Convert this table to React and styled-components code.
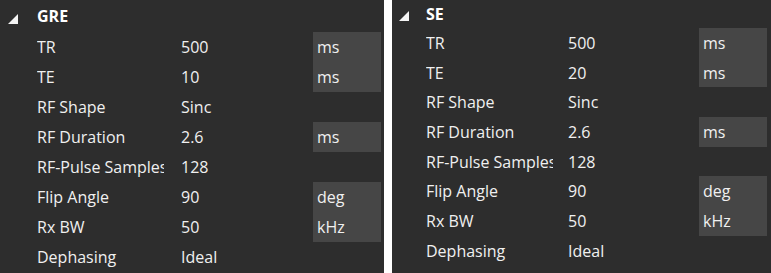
import React from 'react';
import styled, { createGlobalStyle } from 'styled-components';

const GlobalStyle = createGlobalStyle`
    html, body {
        margin: 0;
        padding: 0;
        background: #ffffff;
    }
    body {
        font-family: "Open Sans", "Noto Sans", sans-serif;
    }
`;

const Page = styled.div`
    display: flex;
    gap: 8px;
    width: 771px;
    height: 273px;
    overflow: hidden;
`;

const Panel = styled.section`
    width: ${(p) => p.width}px;
    flex: ${(p) => (p.width ? '0 0 auto' : '1')};
    height: 100%;
    background: #2d2d2d;
    color: #f0f0f0;
    font-size: 16px;
`;

const Header = styled.div`
    display: flex;
    align-items: center;
    height: ${(p) => p.height}px;
    padding-left: ${(p) => p.arrowLeft}px;
`;

const Arrow = styled.svg`
    width: 10px;
    height: 10px;
    margin-top: ${(p) => p.drop}px;
    margin-right: ${(p) => p.gapRight}px;
    flex: none;
`;

const Title = styled.span`
    font-weight: 700;
    color: #ffffff;
`;

const Grid = styled.div`
    display: grid;
    grid-template-columns: ${(p) => p.cols};
    grid-auto-rows: ${(p) => p.rowHeight}px;
    padding-left: ${(p) => p.indent}px;
`;

const Label = styled.div`
    display: flex;
    align-items: center;
    white-space: nowrap;
    overflow: hidden;
    width: ${(p) => p.clip}px;
`;

const Value = styled.div`
    display: flex;
    align-items: center;
`;

const Unit = styled.div`
    display: flex;
    align-items: center;
    padding-left: 4px;
    background: ${(p) => (p.filled ? '#464646' : 'transparent')};
`;

const rows = (te) => [
    ['TR', '500', 'ms'],
    ['TE', te, 'ms'],
    ['RF Shape', 'Sinc', ''],
    ['RF Duration', '2.6', 'ms'],
    ['RF-Pulse Samples', '128', ''],
    ['Flip Angle', '90', 'deg'],
    ['Rx BW', '50', 'kHz'],
    ['Dephasing', 'Ideal', ''],
];

const Sequence = ({ title, te, width, layout }) => (
    <Panel width={width}>
        <Header height={layout.headerHeight} arrowLeft={layout.arrowLeft}>
            <Arrow viewBox="0 0 10 10" drop={layout.arrowDrop} gapRight={layout.arrowGap}>
                <polygon points="10,0 10,10 0,10" fill="#f4f4f4" />
            </Arrow>
            <Title>{title}</Title>
        </Header>
        <Grid cols={layout.cols} rowHeight={layout.rowHeight} indent={layout.indent}>
            {rows(te).map(([label, value, unit]) => (
                <React.Fragment key={label}>
                    <Label clip={layout.clip}>{label}</Label>
                    <Value>{value}</Value>
                    <Unit filled={unit !== ''}>{unit}</Unit>
                </React.Fragment>
            ))}
        </Grid>
    </Panel>
);

const greLayout = {
    headerHeight: 32,
    arrowLeft: 8,
    arrowDrop: 5,
    arrowGap: 19,
    indent: 37,
    cols: '144px 132px 68px',
    rowHeight: 30,
    clip: 127,
};

const seLayout = {
    headerHeight: 28,
    arrowLeft: 7,
    arrowDrop: 4,
    arrowGap: 17,
    indent: 34,
    cols: '142px 131px 68px',
    rowHeight: 29.7,
    clip: 127,
};

const App = () => (
    <>
        <GlobalStyle />
        <Page>
            <Sequence title="GRE" te="10" width={384} layout={greLayout} />
            <Sequence title="SE" te="20" layout={seLayout} />
        </Page>
    </>
);

export default App;
